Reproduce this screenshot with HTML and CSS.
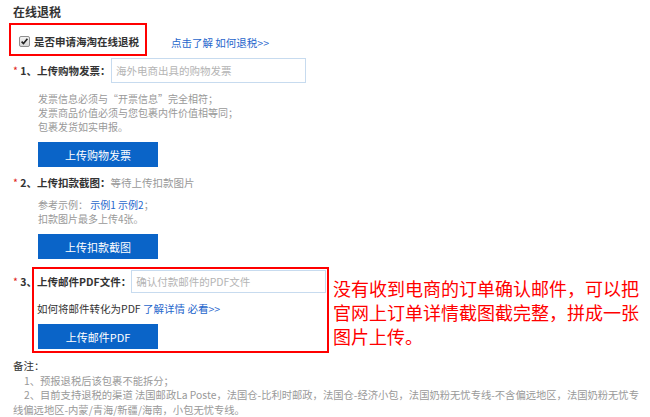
FILE: index.html
```html
<!DOCTYPE html>
<html>
<head>
    <meta charset="utf-8">
    <title>在线退税</title>
    <link rel="stylesheet" href="styles.css">
</head>
<body>
<div class="page">
    <h2 class="title">在线退税</h2>

    <div class="apply-row">
        <label class="apply-box">
            <svg class="check" width="11" height="11" viewBox="0 0 11 11">
                <defs>
                    <linearGradient id="cbg" x1="0" y1="0" x2="0" y2="1">
                        <stop offset="0" stop-color="#f4f4f4"/>
                        <stop offset="1" stop-color="#d6d6d6"/>
                    </linearGradient>
                </defs>
                <rect x="0.5" y="0.5" width="10" height="10" rx="1.5" fill="url(#cbg)" stroke="#8e8e8e"/>
                <path d="M2.6 5.6 L4.5 7.6 L8.4 2.8" fill="none" stroke="#222" stroke-width="1.6"/>
            </svg>
            <span class="apply-text">是否申请海淘在线退税</span>
        </label>
        <a href="#" class="link more-link">点击了解 如何退税&gt;&gt;</a>
    </div>

    <!-- step 1 -->
    <div class="step">
        <span class="step-label"><i class="star">*</i> 1、上传购物发票：</span>
        <input type="text" class="field" placeholder="海外电商出具的购物发票">
    </div>
    <p class="hint">
        发票信息必须与“开票信息”完全相符；<br>
        发票商品价值必须与您包裹内件价值相等同；<br>
        包裹发货如实申报。
    </p>
    <a href="#" class="button">上传购物发票</a>

    <!-- step 2 -->
    <div class="step step-text">
        <span class="step-label"><i class="star">*</i> 2、上传扣款截图：</span><span class="muted">等待上传扣款图片</span>
    </div>
    <p class="hint hint-tight">
        参考示例： <a href="#" class="link">示例1</a> <a href="#" class="link">示例2</a>；<br>
        扣款图片最多上传4张。
    </p>
    <a href="#" class="button">上传扣款截图</a>

    <!-- step 3 -->
    <div class="step-three">
        <span class="step-num"><i class="star">*</i> 3、</span>
        <div class="pdf-box">
            <div class="pdf-row">
                <span class="step-label">上传邮件PDF文件：</span>
                <input type="text" class="field field-pdf" placeholder="确认付款邮件的PDF文件">
            </div>
            <p class="pdf-help">如何将邮件转化为PDF <a href="#" class="link">了解详情 必看&gt;&gt;</a></p>
            <a href="#" class="button pdf-button">上传邮件PDF</a>
        </div>
        <p class="annotation">没有收到电商的订单确认邮件，可以把官网上订单详情截图截完整，拼成一张图片上传。</p>
    </div>

    <div class="remarks">
        <div class="remarks-title">备注：</div>
        <p class="remark">1、预报退税后该包裹不能拆分；</p>
        <p class="remark">2、目前支持退税的渠道 法国邮政La Poste，法国仓-比利时邮政，法国仓-经济小包，法国奶粉无忧专线-不含偏远地区，法国奶粉无忧专线偏远地区-内蒙/青海/新疆/海南，小包无忧专线。</p>
    </div>
</div>
</body>
</html>
```

FILE: styles.css
```css
body {
    margin: 0;
    background-color: #FFFFFF;
    font-family: "Noto Sans CJK SC", "Liberation Sans", sans-serif;
    font-size: 10.5px;
    color: #333333;
}

.page {
    padding: 0 4px 0 13px;
}

.title {
    margin: 0;
    padding-top: 4px;
    font-size: 12px;
    line-height: 16px;
    font-weight: bold;
    color: #333333;
}

/* checkbox row */
.apply-row {
    display: flex;
    align-items: center;
    margin-top: 3px;
}

.apply-box {
    display: flex;
    align-items: center;
    box-sizing: border-box;
    width: 138px;
    height: 33px;
    margin-left: -4px;
    padding: 4px 0 0 8px;
    border: 2px solid #FF0000;
}

.check {
    display: block;
    margin-right: 4px;
}

.apply-text {
    font-weight: bold;
    line-height: 14px;
}

.link {
    color: #1f66cc;
    text-decoration: none;
}

.more-link {
    margin: 6px 0 0 24px;
}

/* steps */
.step {
    display: flex;
    align-items: center;
    height: 25px;
    margin-top: 2px;
}

.step-label {
    font-weight: bold;
    line-height: 16px;
    white-space: nowrap;
}

.step > .step-label {
    width: 98px;
}

.step-text {
    height: 16px;
    margin-top: 8px;
}

.step-text > .step-label {
    width: auto;
}

.star {
    font-style: normal;
    font-weight: normal;
    color: #e02020;
}

.muted {
    color: #999999;
    line-height: 16px;
}

.field {
    box-sizing: border-box;
    width: 195px;
    height: 25px;
    margin: 0;
    padding: 0 4px;
    border: 1px solid #c7dbef;
    font-family: inherit;
    font-size: 10.5px;
    color: #333333;
    outline: none;
}

.field::placeholder {
    color: #b4b4b4;
}

.hint {
    margin: 9px 0 0 25px;
    font-size: 10px;
    line-height: 14px;
    color: #999999;
}

.hint-tight {
    margin-top: 7px;
}

.button {
    display: flex;
    align-items: center;
    justify-content: center;
    width: 120px;
    height: 25px;
    margin: 8px 0 0 25px;
    background-color: #0a64c8;
    color: #FFFFFF;
    font-size: 11px;
    text-decoration: none;
}

/* step 3 */
.step-three {
    display: flex;
    align-items: flex-start;
    margin-top: 8px;
}

.step-num {
    width: 19px;
    padding-top: 7px;
    font-weight: bold;
    line-height: 16px;
    white-space: nowrap;
}

.pdf-box {
    box-sizing: border-box;
    width: 297px;
    height: 86px;
    padding: 1px 1px 0 3px;
    border: 2px solid #FF0000;
}

.pdf-row {
    display: flex;
    align-items: center;
    justify-content: space-between;
}

.field-pdf {
    height: 23px;
}

.pdf-help {
    margin: 8px 0 0 0;
    line-height: 16px;
}

.pdf-button {
    margin: 7px 0 0 1px;
}

.annotation {
    width: 310px;
    margin: 9px 0 0 4px;
    font-size: 18px;
    line-height: 24px;
    color: #FF0000;
}

/* remarks */
.remarks {
    margin-top: 6px;
    line-height: 14.5px;
}

.remarks-title {
    color: #333333;
}

.remark {
    margin: 0;
    font-size: 10.3px;
    text-indent: 11px;
    color: #999999;
}
```
